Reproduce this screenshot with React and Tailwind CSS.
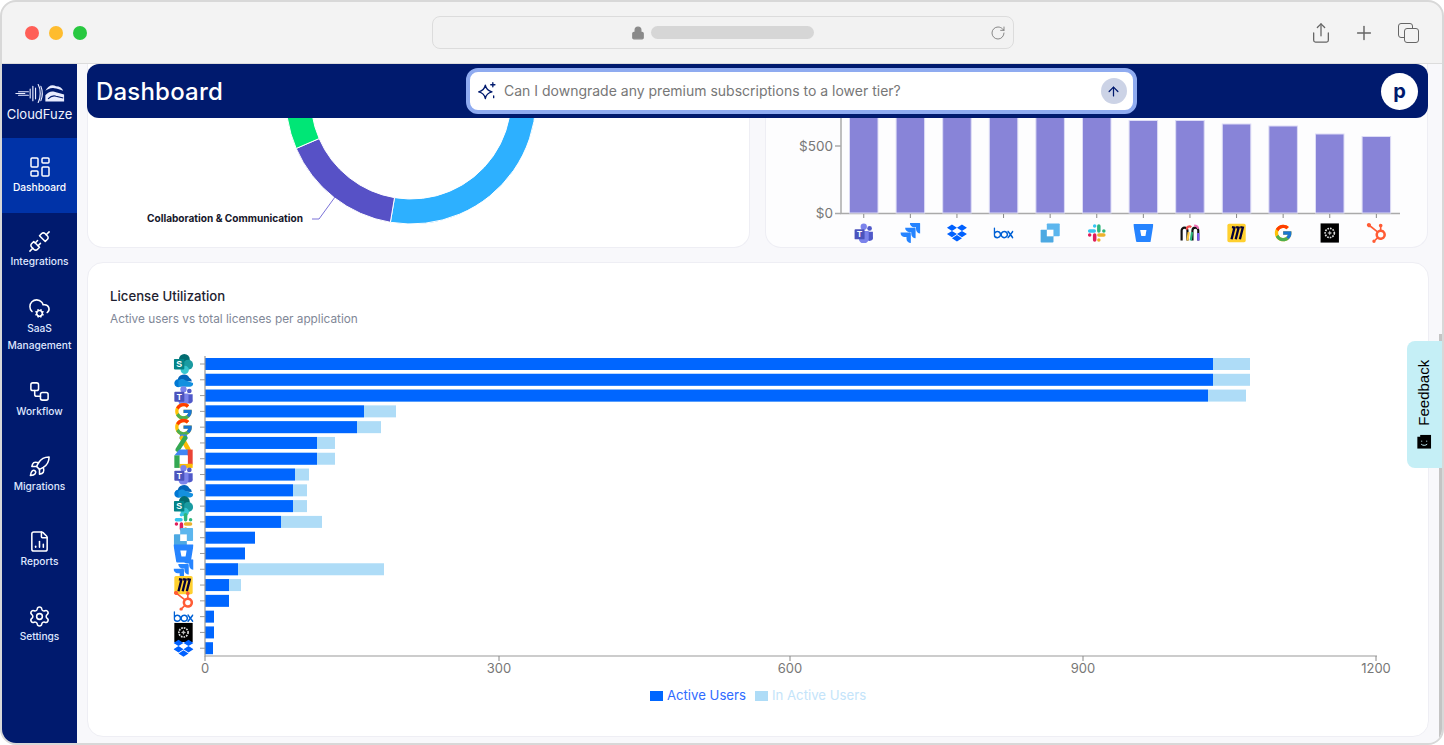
import { ArrowUp, CloudCog, FileChartColumn, LayoutDashboard, Lock, Plus, RotateCw, Rocket, Settings, Share, Unplug, Workflow } from 'lucide-react';
import { FcGoogle } from 'react-icons/fc';
import { SiBitbucket, SiBox, SiDropbox, SiHubspot, SiJira } from 'react-icons/si';

const navItems = [
    { label: 'Integrations', icon: Unplug },
    { label: 'SaaS Management', icon: CloudCog },
    { label: 'Workflow', icon: Workflow },
    { label: 'Migrations', icon: Rocket },
    { label: 'Reports', icon: FileChartColumn },
    { label: 'Settings', icon: Settings },
];

// app logos, all drawn in a 24 box
function Logo({ name, x, y, size = 24 }) {
    const box = { x, y, width: size, height: size };
    const inner = { ...box, viewBox: '0 0 24 24' };
    if (name === 'google') return <FcGoogle {...box} size={size} />;
    if (name === 'jira') return <SiJira {...box} size={size} color="#2684ff" />;
    if (name === 'dropbox') return <SiDropbox {...box} size={size} color="#0061ff" />;
    if (name === 'box') return <SiBox {...box} size={size} color="#0061d5" />;
    if (name === 'bitbucket') return <SiBitbucket {...box} size={size} color="#2684ff" />;
    if (name === 'hubspot') return <SiHubspot {...box} size={size} color="#ff5c35" />;
    if (name === 'teams') {
        return (
            <svg {...inner}>
                <circle cx="19" cy="6.500" r="2.800" fill="#5059c9" />
                <path d="M15 10.500h8v6a4 4 0 0 1-8 1.800z" fill="#5059c9" />
                <circle cx="12" cy="4.500" r="3.800" fill="#7b83eb" />
                <path d="M6 9.500h12v8.500a6 6 0 0 1-12 1z" fill="#7b83eb" />
                <rect x="1" y="7.500" width="12" height="12" rx="1" fill="#4b53bc" />
                <text x="7" y="17" textAnchor="middle" fontSize="10" fontWeight="700" fill="#fff" fontFamily="Liberation Sans, sans-serif">T</text>
            </svg>
        );
    }
    if (name === 'onedrive') {
        return (
            <svg {...inner}>
                <path d="M5 13a7.500 7.500 0 0 1 14-3.500A5 5 0 0 1 22 14z" fill="#0364b8" />
                <path d="M8 20a4.500 4.500 0 0 1-7-3.500A4.500 4.500 0 0 1 6 11.500l8 3z" fill="#0078d4" />
                <path d="M6 13c2-2.500 6-2.500 8-.5l9.500 3.500a4 4 0 0 1-3.500 4.500H6z" fill="#1490df" />
            </svg>
        );
    }
    if (name === 'sharepoint') {
        return (
            <svg {...inner}>
                <circle cx="13" cy="6.500" r="6.500" fill="#036c70" />
                <circle cx="17.500" cy="13" r="6" fill="#1a9ba1" />
                <circle cx="13.500" cy="19" r="5" fill="#37c6d0" />
                <rect x="0.500" y="6" width="12.500" height="12.500" rx="1" fill="#038387" />
                <text x="6.700" y="16" textAnchor="middle" fontSize="10.500" fontWeight="700" fill="#fff" fontFamily="Liberation Sans, sans-serif">S</text>
            </svg>
        );
    }
    if (name === 'ads') {
        return (
            <svg {...inner}>
                <path d="M8 2h8l1 5H7z" fill="#4285f4" />
                <path d="M18 20 10 6" stroke="#fbbc04" strokeWidth="5.500" strokeLinecap="round" />
                <path d="M5 20 14 6" stroke="#34a853" strokeWidth="5.500" strokeLinecap="round" />
            </svg>
        );
    }
    if (name === 'workspace') {
        return (
            <svg {...inner}>
                <path d="M7 1h11v7H1z" fill="#4285f4" />
                <rect x="1" y="8" width="6.500" height="15" fill="#34a853" />
                <rect x="17" y="1" width="6" height="18" fill="#ea4335" />
                <rect x="7.500" y="18" width="15.500" height="5" fill="#fbbc04" />
                <rect x="7.500" y="8" width="9.500" height="10" fill="#fff" />
            </svg>
        );
    }
    if (name === 'slack') {
        return (
            <svg {...inner} fill="none" strokeWidth="4.200" strokeLinecap="round">
                <path d="M3.500 9.500h5.500M9.500 3.500h.01" stroke="#36c5f0" />
                <path d="M14.500 3.500v6M20.500 9.500h.01" stroke="#2eb67d" />
                <path d="M14.500 14.500h6M14.500 20.500h.01" stroke="#ecb22e" />
                <path d="M9.500 14.500v6M3.500 14.500h.01" stroke="#e01e5a" />
            </svg>
        );
    }
    if (name === 'squares') {
        return (
            <svg {...inner}>
                <rect x="8" y="0.500" width="15.500" height="15.500" rx="1" fill="#5cb6ee" />
                <rect x="0.500" y="8" width="15.500" height="15.500" rx="1" fill="#4da9e2" />
                <rect x="8" y="8" width="8" height="8" fill="#fff" />
            </svg>
        );
    }
    if (name === 'monday') {
        return (
            <svg {...inner} fill="none" strokeWidth="2.600">
                <path d="M2 21V9a3.500 3.500 0 0 1 7 0v12" stroke="#111" />
                <path d="M15 21V9a3.500 3.500 0 0 1 7 0v12" stroke="#111" />
                <path d="M8.500 8a3 3 0 0 1 5-3" stroke="#f24e4e" />
                <path d="M9 21l1.500-10" stroke="#ffc83d" />
                <path d="M13 21l1.500-10" stroke="#2cb67d" />
                <path d="M22 21V12" stroke="#7a5af8" />
                <path d="M17 3c2.500 0 4.500 1.500 5 4" stroke="#ec6fb5" />
            </svg>
        );
    }
    if (name === 'miro') {
        return (
            <svg {...inner}>
                <rect x="1" y="1" width="22" height="22" rx="2" fill="#ffd02f" />
                <path d="M6.500 5 9.500 5.500 6 19.500M11.500 5l3 .5L11 19.500M16.500 5l3 .5L16 19.500" fill="none" stroke="#050038" strokeWidth="2.800" />
            </svg>
        );
    }
    if (name === 'blackbox') {
        return (
            <svg {...inner}>
                <rect x="1" y="0.500" width="22" height="23" fill="#000" />
                <circle cx="12" cy="12" r="5.500" fill="none" stroke="#ddd" strokeWidth="2" strokeDasharray="2 1.200" />
                <path d="M12 9l1 2 2 1-2 1-1 2-1-2-2-1 2-1z" fill="#bbb" />
            </svg>
        );
    }
    return null;
}

const costBars = [
    { name: 'teams', top: 100 },
    { name: 'jira', top: 100 },
    { name: 'dropbox', top: 100 },
    { name: 'box', top: 100 },
    { name: 'squares', top: 100 },
    { name: 'slack', top: 100 },
    { name: 'bitbucket', top: 120.500 },
    { name: 'monday', top: 120.500 },
    { name: 'miro', top: 124 },
    { name: 'google', top: 126 },
    { name: 'blackbox', top: 134 },
    { name: 'hubspot', top: 136.500 },
];

// right ends of the bars, measured in px from the page's left edge
const licenseBars = [
    { name: 'sharepoint', active: 1213, total: 1250 },
    { name: 'onedrive', active: 1213, total: 1250 },
    { name: 'teams', active: 1208, total: 1246 },
    { name: 'google', active: 364, total: 396 },
    { name: 'google', active: 357, total: 381 },
    { name: 'ads', active: 317, total: 335 },
    { name: 'workspace', active: 317, total: 335 },
    { name: 'teams', active: 295, total: 309 },
    { name: 'onedrive', active: 293, total: 307 },
    { name: 'sharepoint', active: 293, total: 307 },
    { name: 'slack', active: 281, total: 322 },
    { name: 'squares', active: 255, total: 255 },
    { name: 'bitbucket', active: 245, total: 245 },
    { name: 'jira', active: 238, total: 384 },
    { name: 'miro', active: 229, total: 241 },
    { name: 'hubspot', active: 229, total: 229 },
    { name: 'box', active: 214, total: 214 },
    { name: 'blackbox', active: 214, total: 214 },
    { name: 'dropbox', active: 213, total: 213 },
];

function arc(cx, cy, R, r, a0, a1) {
    const p = (rad, a) => {
        const t = (a * Math.PI) / 180;
        return `${(cx + rad * Math.cos(t)).toFixed(2)} ${(cy + rad * Math.sin(t)).toFixed(2)}`;
    };
    const large = Math.abs(a1 - a0) > 180 ? 1 : 0;
    return `M${p(R, a0)} A${R} ${R} 0 ${large} 1 ${p(R, a1)} L${p(r, a1)} A${r} ${r} 0 ${large} 0 ${p(r, a0)} Z`;
}

function Donut() {
    // svg origin sits at the card's top left
    const cx = 323;
    const cy = 35;
    return (
        <svg width="662" height="184" className="block">
            <path d={arc(cx, cy, 125, 100, -30, 99.500)} fill="#2db0ff" stroke="#fff" strokeWidth="1" />
            <path d={arc(cx, cy, 125, 100, 99.500, 156.700)} fill="#5751c6" stroke="#fff" strokeWidth="1" />
            <path d={arc(cx, cy, 125, 100, 156.700, 185)} fill="#00e676" stroke="#fff" strokeWidth="1" />
            <path d="M247 133 L231 155 L224 155" fill="none" stroke="#7a72d8" strokeWidth="1" />
            <text x="59" y="158" fontSize="10.100" fontWeight="700" fill="#16162a" fontFamily="Inter, sans-serif">Collaboration &amp; Communication</text>
        </svg>
    );
}

function CostChart() {
    return (
        <svg width="664" height="184" className="block">
            <path d="M75 50V149.500H634" fill="none" stroke="#aaa" strokeWidth="1.500" />
            <path d="M69 82h6M69 149.500h6" stroke="#aaa" strokeWidth="1.500" />
            <text x="67" y="87" textAnchor="end" fontSize="13.500" fill="#777" fontFamily="Inter, sans-serif">$500</text>
            <text x="67" y="154" textAnchor="end" fontSize="13.500" fill="#777" fontFamily="Inter, sans-serif">$0</text>
            {costBars.map((bar, i) => {
                const left = 83.500 + i * 46.600;
                return (
                    <g key={i}>
                        <rect x={left} y={bar.top - 64} width="28.500" height={213 - bar.top} fill="#8884d8" stroke="#dddcf6" strokeWidth="1" />
                        <path d={`M${left + 14.250} 150v4`} stroke="#888" strokeWidth="1" />
                        <Logo name={bar.name} x={left + 14.250 - 10} y={159} size={20} />
                    </g>
                );
            })}
        </svg>
    );
}

function LicenseChart() {
    const axisX = 117;
    const ticks = [
        { label: '0', x: 117 },
        { label: '300', x: 411 },
        { label: '600', x: 702 },
        { label: '900', x: 995 },
        { label: '1200', x: 1288 },
    ];
    return (
        <svg width="1340" height="341" className="block">
            {licenseBars.map((bar, i) => {
                const y = 15 + i * 15.790;
                return (
                    <g key={i}>
                        {bar.total > bar.active && (
                            <rect x={axisX} y={y} width={bar.total - 205} height="12" fill="#aedcf7" />
                        )}
                        <rect x={axisX} y={y} width={bar.active - 205} height="12" fill="#0066ff" />
                        <path d={`M${axisX - 5} ${y + 6}h5`} stroke="#999" strokeWidth="1" />
                    </g>
                );
            })}
            {licenseBars.map((bar, i) => (
                <Logo key={i} name={bar.name} x={85.500} y={11 + i * 15.790} size={20} />
            ))}
            <path d={`M${axisX} 13V313H1289`} fill="none" stroke="#999" strokeWidth="1.200" />
            {ticks.map(t => (
                <g key={t.label}>
                    <path d={`M${t.x} 313v5`} stroke="#888" strokeWidth="1" />
                    <text x={t.x} y="330" textAnchor="middle" fontSize="13" fill="#777" fontFamily="Inter, sans-serif">{t.label}</text>
                </g>
            ))}
        </svg>
    );
}

export default function App() {
    return (
        <div className="h-[745px] w-[1444px] overflow-hidden bg-white font-['Inter',sans-serif]">
            <div className="relative flex h-full flex-col overflow-hidden rounded-[16px] border-2 border-[#d8d8d8] bg-[#f3f3f3]">
                {/* browser toolbar */}
                <div className="flex h-[62px] shrink-0 items-center border-b border-[#dcdcdc] pl-[23px] pr-[22px]">
                    <div className="flex gap-[10px]">
                        <span className="h-[14px] w-[14px] rounded-full bg-[#ff5f57]" />
                        <span className="h-[14px] w-[14px] rounded-full bg-[#febc2e]" />
                        <span className="h-[14px] w-[14px] rounded-full bg-[#28c840]" />
                    </div>
                    <div className="ml-[345px] flex h-[33px] w-[582px] items-center rounded-lg border border-[#dcdcdc] bg-[#f2f2f2] pl-[198px] pr-[7px]">
                        <Lock size={14} className="text-[#8a8a8a]" fill="#8a8a8a" />
                        <span className="ml-[6px] h-[13px] w-[163px] rounded-full bg-[#d6d6d6]" />
                        <RotateCw size={16} strokeWidth={1.300} className="ml-auto text-[#777]" />
                    </div>
                    <div className="ml-auto flex items-center text-[#666]">
                        <Share size={22} strokeWidth={1.400} />
                        <Plus size={22} strokeWidth={1.600} className="ml-[21px]" />
                        <div className="relative ml-[23px] h-[20px] w-[22px]">
                            <span className="absolute left-0 top-0 h-[15px] w-[15px] rounded-[3px] border-[1.500px] border-[#666]" />
                            <span className="absolute bottom-0 right-[1px] h-[15px] w-[15px] rounded-[3px] border-[1.500px] border-[#666] bg-[#f3f3f3]" />
                        </div>
                    </div>
                </div>

                <div className="flex min-h-0 flex-1">
                    {/* sidebar */}
                    <aside className="w-[75px] shrink-0 bg-[#001a6e] text-[#dfe6ff]">
                        <div className="flex h-[74px] flex-col items-center justify-center pt-[3px]">
                            <svg width="50" height="21" viewBox="0 0 56 22" fill="none" stroke="#e8ecff" strokeWidth="1.300">
                                <path d="M1 11h10M4 9h11M4 13h11M17 6v10M20 3v16M23 5v12M26 1c3 5 3 15 0 20M29 3c2 5 2 11 0 16" strokeLinecap="round" />
                                <path d="M34 8c3-6 8-8 12-5 4 0 7 2 8 5-5-2-7-3-10-3-4-1-7 1-10 3z" fill="#e8ecff" stroke="none" />
                                <path d="M34 13c3-4 7-5 10-4l11 3v8H34z" fill="#e8ecff" stroke="none" />
                                <path d="M37 17c3-3 6-4 9-3l8 2" stroke="#001a6e" strokeWidth="1.200" />
                            </svg>
                            <span className="mt-[1px] text-[13px] leading-[18px] text-[#f2f4ff]">CloudFuze</span>
                        </div>
                        <div className="flex h-[75px] flex-col items-center justify-center gap-[1px] bg-[#0033a8] pb-[2px] text-white">
                            <LayoutDashboard size={24} strokeWidth={1.500} />
                            <span className="text-[10.200px] font-medium leading-[14px]">Dashboard</span>
                        </div>
                        {navItems.map(({ label, icon: Icon }) => (
                            <div key={label} className="flex h-[75px] flex-col items-center justify-center pb-[1px]">
                                <Icon size={23} strokeWidth={1.600} className="text-white" />
                                <span className="text-center text-[10.200px] font-medium leading-[17px]">{label}</span>
                            </div>
                        ))}
                    </aside>

                    {/* page */}
                    <main className="relative min-w-0 flex-1 overflow-hidden bg-[#f8f8fb] pl-[10px] pr-[14px]">
                        <header className="absolute left-[10px] top-0 z-10 flex h-[54px] w-[1341px] items-center rounded-xl bg-[#001a6e] pl-[9px] pr-[10px]">
                            <h1 className="mt-[1px] text-[24px] font-medium tracking-[0.2px] text-white">Dashboard</h1>
                            <div className="ml-[243px] flex h-[46px] w-[671px] items-center rounded-xl border-[4px] border-[#8fabf0] bg-white pl-[7px] pr-[6px]">
                                <svg width="20" height="20" viewBox="0 0 24 24" fill="none" stroke="#001a6e" strokeWidth="1.600" strokeLinejoin="round">
                                    <path d="M10 5c1 5 3 7 8 8-5 1-7 3-8 8-1-5-3-7-8-8 5-1 7-3 8-8z" />
                                    <path d="M19 2v5M16.500 4.500h5M20 18v2" strokeLinecap="round" />
                                </svg>
                                <span className="ml-[7px] text-[14px] leading-[20px] text-[#777]">Can I downgrade any premium subscriptions to a lower tier?</span>
                                <span className="ml-auto flex h-[26px] w-[26px] items-center justify-center rounded-full bg-[#ccd3e6]">
                                    <ArrowUp size={15} strokeWidth={2} className="text-[#001a6e]" />
                                </span>
                            </div>
                            <span className="ml-auto flex h-[37px] w-[37px] items-center justify-center rounded-full bg-white text-[20px] font-bold leading-none text-[#001a6e]">p</span>
                        </header>

                        <div className="flex h-[184px] gap-[15px]">
                            <section className="w-[663px] overflow-hidden rounded-b-2xl border border-t-0 border-[#eeeef4] bg-white">
                                <Donut />
                            </section>
                            <section className="w-[664px] overflow-hidden rounded-b-2xl border border-t-0 border-[#eeeef4] bg-[#fdfdfe]">
                                <CostChart />
                            </section>
                        </div>

                        <section className="mt-[14px] h-[475px] w-[1342px] rounded-2xl border border-[#eeeef4] bg-white pt-[24px]">
                            <div className="pl-[22px]">
                                <h2 className="text-[13.200px] font-medium leading-[18px] text-[#1e1e30]">License Utilization</h2>
                                <p className="mt-[6px] text-[11.800px] leading-[16px] text-[#7f8797]">Active users vs total licenses per application</p>
                            </div>
                            <div className="mt-[16px]">
                                <LicenseChart />
                            </div>
                            <div className="mt-[2px] flex items-center justify-center text-[13.200px]">
                                <span className="h-[10px] w-[13px] bg-[#0066ff]" />
                                <span className="ml-[4px] text-[#2f6bff]">Active Users</span>
                                <span className="ml-[9px] h-[10px] w-[13px] bg-[#aedcf7]" />
                                <span className="ml-[4px] text-[#c4e4fa]">In Active Users</span>
                            </div>
                        </section>

                        {/* page scrollbar */}
                        <span className="absolute bottom-0 right-0 top-[270px] w-[3px] bg-[#c4c4c4]" />
                        {/* feedback tab */}
                        <div className="absolute right-0 top-[277px] z-10 flex h-[127px] w-[35px] items-center justify-center rounded-l-lg bg-[#c5eff6]">
                            <div className="flex -rotate-90 items-center gap-[9px] whitespace-nowrap font-['Liberation_Sans',sans-serif] text-[15px] text-black">
                                <svg width="14" height="14" viewBox="0 0 14 14" className="rotate-90">
                                    <path d="M0 2h3V0h11v14H0z" fill="#000" />
                                    <path d="M4.500 6v1M9.500 6v1M4 9.500c1.500 1.500 4.500 1.500 6 0" stroke="#c5eff6" strokeWidth="1" fill="none" />
                                </svg>
                                <span>Feedback</span>
                            </div>
                        </div>
                    </main>
                </div>
            </div>
        </div>
    );
}
